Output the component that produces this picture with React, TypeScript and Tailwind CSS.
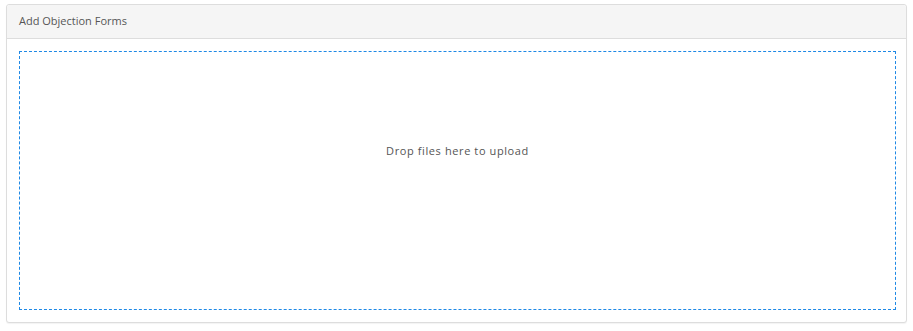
export default function App() {
  return (
    <div className="bg-white w-[913px] h-[331px] pt-1 pl-1.5" style={{ fontFamily: '"Open Sans", "Liberation Sans", sans-serif' }}>
      <div className="w-[901px] rounded-[3px] border border-[#dddddd] bg-white shadow-[0_1px_1px_rgba(0,0,0,0.05)]">
        <div className="h-[34px] flex items-center px-3 bg-[#f5f5f5] border-b border-[#dddddd] rounded-t-[3px] text-[11px] text-[#555555]">
          Add Objection Forms
        </div>
        <div className="pt-3 pb-3 pl-3 pr-[10px]">
          <div className="h-[259px] border border-dashed border-[#1e88e5] pt-[91px] text-center text-[11px] leading-4 text-[#555555] tracking-[0.6px]">
            Drop files here to upload
          </div>
        </div>
      </div>
    </div>
  );
}
